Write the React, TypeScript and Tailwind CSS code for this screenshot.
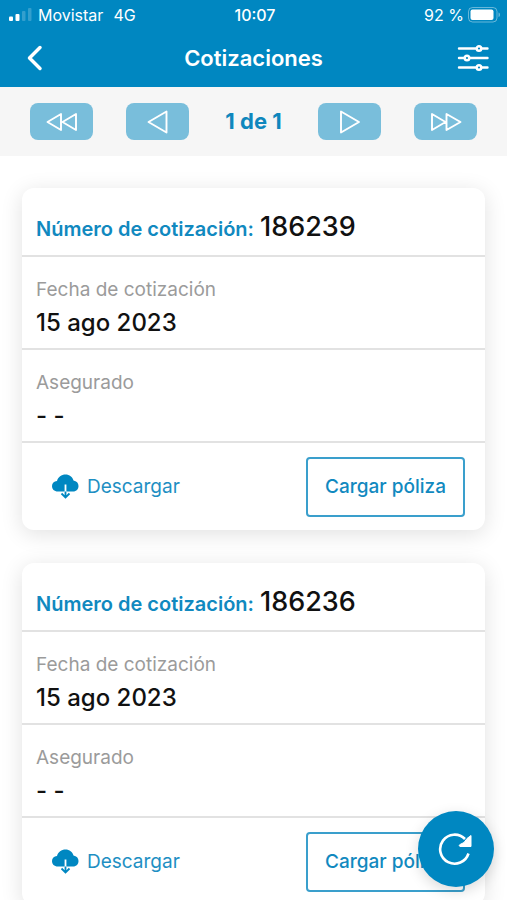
import type { ReactNode } from "react";

type Quote = { id: string; date: string; insured: string };

const quotes: Quote[] = [
  { id: "186239", date: "15 ago 2023", insured: "- -" },
  { id: "186236", date: "15 ago 2023", insured: "- -" },
];

function StatusBar() {
  return (
    <div className="grid h-[30px] grid-cols-3 items-center pr-1.5 pl-[9px] text-base">
      <div className="flex items-center gap-1.5">
        <svg width="23" height="14" viewBox="0 0 23 14" fill="white" aria-hidden="true">
          <rect x="0" y="8.500" width="4" height="4.500" rx="1" />
          <rect x="6.500" y="6" width="4" height="7" rx="1" />
          <rect x="13" y="3" width="3.500" height="10" rx="1" opacity="0.200" />
          <rect x="19" y="0" width="3.500" height="13" rx="1" opacity="0.200" />
        </svg>
        <span>Movistar</span>
        <span className="ml-1">4G</span>
      </div>
      <span className="text-center font-medium">10:07</span>
      <div className="flex items-center justify-end gap-1">
        <span>92 %</span>
        <svg width="33" height="16" viewBox="0 0 33 16" aria-hidden="true">
          <rect x="0.500" y="0.500" width="28.500" height="14.500" rx="4" fill="none" stroke="white" strokeOpacity="0.400" />
          <rect x="2.500" y="2.500" width="23" height="10.500" rx="2" fill="white" />
          <path d="M30.500 5.500c2 .5 2 4 0 4.500z" fill="white" opacity="0.400" />
        </svg>
      </div>
    </div>
  );
}

function Header() {
  return (
    <header className="bg-[#0087c1] text-white">
      <StatusBar />
      <div className="grid h-[57px] grid-cols-[40px_1fr_40px] items-center px-[15px]">
        <button type="button" aria-label="Volver" className="flex h-10 items-center justify-center">
          <svg width="18" height="28" viewBox="0 0 18 28" fill="none" stroke="white" strokeWidth="3.500" strokeLinecap="round" strokeLinejoin="round">
            <path d="M14 2.500 3.500 13 14 23.500" />
          </svg>
        </button>
        <h1 className="text-center text-[22px] font-semibold">Cotizaciones</h1>
        <button type="button" aria-label="Filtros" className="flex h-10 items-center justify-end">
          <svg width="36" height="28" viewBox="0 0 36 28" fill="#0087c1" stroke="white" strokeWidth="2.400" strokeLinecap="round">
            <path d="M3 3.500h28.500M3 13h28.500M3 22.500h28.500" />
            <circle cx="23" cy="3.500" r="2.300" />
            <circle cx="11" cy="13" r="2.300" />
            <circle cx="23" cy="22.500" r="2.300" />
          </svg>
        </button>
      </div>
    </header>
  );
}

function PagerButton({ label, children }: { label: string; children: ReactNode }) {
  return (
    <button type="button" aria-label={label} className="flex h-[37px] w-[63px] items-center justify-center rounded-lg bg-[#79bedb]">
      <svg width="34" height="26" viewBox="0 0 34 26" fill="none" stroke="white" strokeWidth="1.900" strokeLinejoin="round" aria-hidden="true">
        {children}
      </svg>
    </button>
  );
}

function Pager() {
  return (
    <nav aria-label="Paginación" className="flex h-[69px] items-center justify-between bg-[#f6f6f6] px-[30px]">
      <PagerButton label="Primera página">
        <path d="M16 5v16L2.500 13zM31 5v16l-13.500-8z" />
      </PagerButton>
      <PagerButton label="Página anterior">
        <path d="M26.500 2.500v21L8.500 13z" />
      </PagerButton>
      <span className="px-1 text-[22px] font-bold text-[#0f87bd]">1 de 1</span>
      <PagerButton label="Página siguiente">
        <path d="M8 2.500v21l18-10.500z" />
      </PagerButton>
      <PagerButton label="Última página">
        <path d="M3 5v16l13.500-8zM17.500 5v16l14-8z" />
      </PagerButton>
    </nav>
  );
}

function Field({ label, value }: { label: string; value: string }) {
  return (
    <div className="h-[93px] border-b-2 border-[#e2e2e2] px-[14px] pt-[17px]">
      <dt className="text-[19px] leading-8 text-[#9b9b9b]">{label}</dt>
      <dd className="text-2xl leading-[34px] font-medium text-[#111111]">{value}</dd>
    </div>
  );
}

function QuoteCard({ quote }: { quote: Quote }) {
  return (
    <article className="rounded-xl bg-white shadow-[0_4px_22px_rgba(0,0,0,0.120)]">
      <h2 className="flex h-[69px] items-baseline gap-1.5 border-b-2 border-[#e2e2e2] px-[14px] pt-[21px]">
        <span className="text-xl font-semibold text-[#1189bf]">Número de cotización:</span>
        <span className="text-[27px] leading-9 font-medium text-[#111111]">{quote.id}</span>
      </h2>
      <dl>
        <Field label="Fecha de cotización" value={quote.date} />
        <Field label="Asegurado" value={quote.insured} />
      </dl>
      <div className="flex h-[87px] items-center justify-between pr-5 pl-[29px]">
        <button type="button" className="flex items-center gap-2 text-[19px] leading-8 text-[#1e8fc3]">
          <svg width="28" height="26" viewBox="0 0 28 26" aria-hidden="true">
            <path d="M7 17.500C3 17.500 1 15 1 12c0-3 2-4.500 5-5C7 3 10.500 .5 14.500 .5S21.500 3 22.500 6.500C25.500 7 27.500 9 27.500 12s-2 5.500-5.500 5.500z" fill="#0087c1" />
            <path d="M14.500 10.500v8" stroke="white" strokeWidth="1.800" />
            <path d="M14.500 17.500v6M10.500 19.500l4 4 4-4" fill="none" stroke="#0087c1" strokeWidth="1.800" />
          </svg>
          Descargar
        </button>
        <button type="button" className="h-[60px] rounded border-2 border-[#3a9fcc] px-[17px] text-[19px] leading-8 font-medium text-[#1189bf]">
          Cargar póliza
        </button>
      </div>
    </article>
  );
}

export default function App() {
  return (
    <div className="min-h-screen bg-white font-[Inter,'Liberation_Sans',sans-serif]">
      <Header />
      <Pager />
      <main className="flex flex-col gap-[33px] px-[22px] pt-8">
        {quotes.map((quote) => (
          <QuoteCard key={quote.id} quote={quote} />
        ))}
      </main>
      <button
        type="button"
        aria-label="Actualizar"
        className="fixed right-[13px] bottom-[13px] flex size-[76px] items-center justify-center rounded-full bg-[#0087c1] shadow-[0_4px_14px_rgba(0,0,0,0.150)]"
      >
        <svg width="36" height="36" viewBox="0 0 36 36" fill="none" aria-hidden="true">
          <path d="M30.500 22.500A14.500 14.500 0 1 1 27 8" stroke="white" strokeWidth="2.600" />
          <path d="M33 4.500v11H22c-1-.5-1-1.500 0-2l4-2 3-4z" fill="white" stroke="white" strokeLinejoin="round" />
        </svg>
      </button>
    </div>
  );
}
